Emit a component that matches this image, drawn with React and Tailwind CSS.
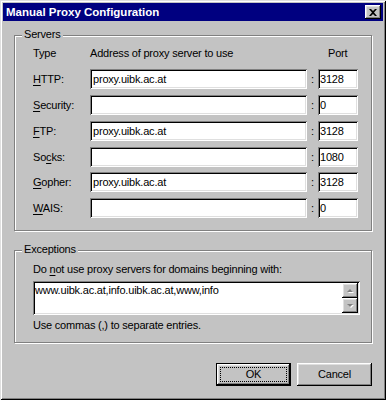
import React from 'react'

const raised =
  'bg-[#c3c3c3] shadow-[inset_-1px_-1px_0_#000,inset_1px_1px_0_#fff,inset_-2px_-2px_0_#808080,inset_2px_2px_0_#dfdfdf]'
const sunken =
  'bg-white shadow-[inset_1px_1px_0_#808080,inset_-1px_-1px_0_#fff,inset_2px_2px_0_#000,inset_-2px_-2px_0_#dfdfdf]'

function Group({ label, className, children }) {
  return (
    <div
      className={`relative border border-[#808080] shadow-[inset_1px_1px_0_#fff,1px_1px_0_#fff] ${className}`}
    >
      <span className="absolute left-[7px] top-[-8px] bg-[#c3c3c3] px-[2px] leading-[13px]">{label}</span>
      {children}
    </div>
  )
}

function Label({ text, u }) {
  const i = text.indexOf(u)
  return (
    <span>
      {text.slice(0, i)}
      <span className="underline underline-offset-[2px]">{u}</span>
      {text.slice(i + 1)}
    </span>
  )
}

const rows = [
  { name: 'HTTP:', key: 'H', host: 'proxy.uibk.ac.at', port: '3128', mt: 'mt-[9px]' },
  { name: 'Security:', key: 'S', host: '', port: '0', mt: 'mt-[6px]' },
  { name: 'FTP:', key: 'F', host: 'proxy.uibk.ac.at', port: '3128', mt: 'mt-[6px]' },
  { name: 'Socks:', key: 'c', host: '', port: '1080', mt: 'mt-[6px]' },
  { name: 'Gopher:', key: 'G', host: 'proxy.uibk.ac.at', port: '3128', mt: 'mt-[5px]' },
  { name: 'WAIS:', key: 'W', host: '', port: '0', mt: 'mt-[6px]' },
]

function ScrollBtn({ up }) {
  return (
    <div className={`w-[16px] h-[15px] flex items-center justify-center ${raised}`}>
      <svg width="9" height="6" viewBox="0 0 9 6">
        {up ? (
          <>
            <polygon points="2,5 5,2 8,5" fill="#fff" />
            <polygon points="1,4 4,1 7,4" fill="#808080" />
          </>
        ) : (
          <>
            <polygon points="2,2 5,5 8,2" fill="#fff" />
            <polygon points="1,1 4,4 7,1" fill="#808080" />
          </>
        )}
      </svg>
    </div>
  )
}

export default function App() {
  return (
    <div className="w-[386px] h-[400px] bg-[#c3c3c3] p-[3px] text-black text-[11px] leading-[13px] tracking-[-0.2px] font-['Liberation_Sans',Arial,sans-serif] shadow-[inset_1px_1px_0_#dfdfdf,inset_-1px_-1px_0_#000,inset_2px_2px_0_#fff,inset_-2px_-2px_0_#808080]">
      {/* title bar */}
      <div className="h-[18px] bg-[#000080] flex items-center justify-between pl-[3px] pr-[2px]">
        <span className="text-white font-bold text-[11.5px] tracking-[0px]">Manual Proxy Configuration</span>
        <div className={`w-[16px] h-[14px] flex items-center justify-center ${raised}`}>
          <svg width="8" height="7" viewBox="0 0 8 7">
            <path d="M0 0h2l2 2 2-2h2L5 3.5 8 7H6L4 5 2 7H0l3-3.5z" fill="#000" />
          </svg>
        </div>
      </div>

      <div className="pl-[11px] pt-[14px]">
        {/* servers */}
        <Group label="Servers" className="w-[358px] h-[196px] pt-[11px] pl-[18px]">
          <div className="flex">
            <span className="w-[57px]">Type</span>
            <span className="w-[238px]">Address of proxy server to use</span>
            <span>Port</span>
          </div>
          {rows.map(r => (
            <div key={r.name} className={`flex items-center h-[20px] ${r.mt}`}>
              <span className="w-[57px]">
                <Label text={r.name} u={r.key} />
              </span>
              <div className={`w-[217px] h-[20px] pl-[3px] flex items-center ${sunken}`}>{r.host}</div>
              <span className="w-[11px] text-center">:</span>
              <div className={`w-[40px] h-[20px] pl-[2px] flex items-center ${sunken}`}>{r.port}</div>
            </div>
          ))}
        </Group>

        {/* exceptions */}
        <Group label="Exceptions" className="mt-[19px] w-[358px] h-[93px] pt-[12px] pl-[18px]">
          <div>
            Do <Label text="not" u="n" /> use proxy servers for domains beginning with:
          </div>
          <div className={`mt-[5px] w-[327px] h-[34px] p-[2px] flex ${sunken}`}>
            <div className="flex-1 pt-[1px]">www.uibk.ac.at,info.uibk.ac.at,www,info</div>
            <div className="flex flex-col">
              <ScrollBtn up />
              <ScrollBtn />
            </div>
          </div>
          <div className="mt-[4px]">Use commas (,) to separate entries.</div>
        </Group>

        {/* buttons */}
        <div className="mt-[20px] w-[358px] flex justify-end gap-[6px]">
          <div className="w-[75px] h-[23px] border border-black p-0">
            <div className={`w-full h-full flex items-center justify-center ${raised}`}>
              <span className="px-[23px] py-[1px] outline outline-1 outline-dotted outline-black outline-offset-[-1px] w-[67px] h-[15px] flex items-center justify-center">
                OK
              </span>
            </div>
          </div>
          <div className={`w-[75px] h-[23px] flex items-center justify-center ${raised}`}>Cancel</div>
        </div>
      </div>
    </div>
  )
}
